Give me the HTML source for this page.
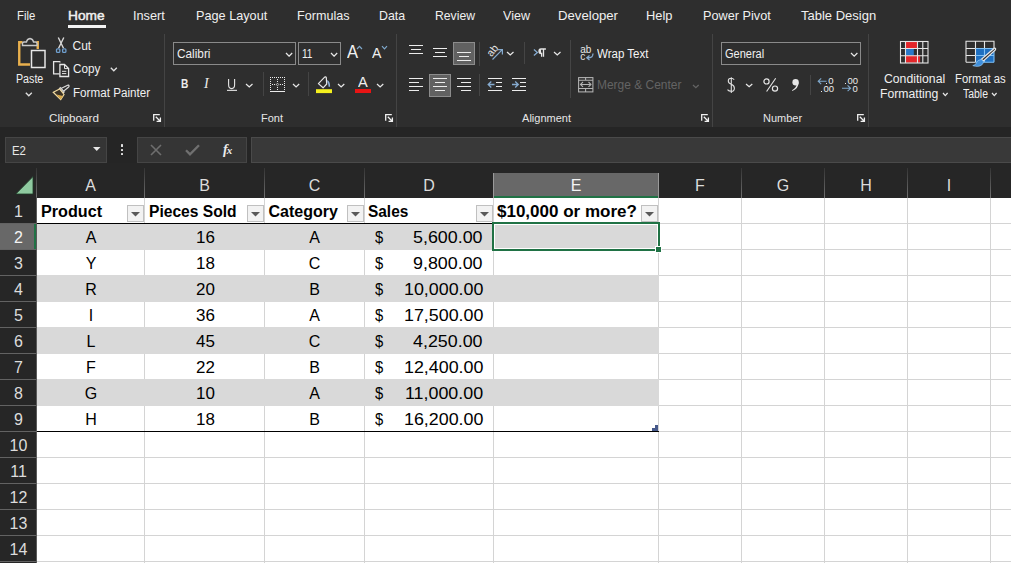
<!DOCTYPE html><html><head><meta charset="utf-8"><style>
html,body{margin:0;padding:0;}
body{width:1011px;height:563px;position:relative;overflow:hidden;background:#2b2b2b;font-family:"Liberation Sans",sans-serif;}
body>div{position:absolute;}
.t{white-space:pre;line-height:0;}
</style></head><body>
<div style="left:0px;top:0px;width:1011px;height:127px;background:#2e2e2e;"></div>
<div style="left:0px;top:127px;width:1011px;height:36px;background:#252525;"></div>
<div class="t" style="left:17.40px;top:16.00px;font-size:13px;color:#f0f0f0;transform:scaleX(0.8708);transform-origin:0 0;">File</div>
<div class="t" style="left:68.20px;top:16.00px;font-size:13px;color:#f0f0f0;transform:scaleX(1.0548);transform-origin:0 0;-webkit-text-stroke:0.45px #f0f0f0;">Home</div>
<div class="t" style="left:133.00px;top:16.00px;font-size:13px;color:#f0f0f0;transform:scaleX(0.9785);transform-origin:0 0;">Insert</div>
<div class="t" style="left:196.30px;top:16.00px;font-size:13px;color:#f0f0f0;transform:scaleX(0.9753);transform-origin:0 0;">Page Layout</div>
<div class="t" style="left:297.20px;top:16.00px;font-size:13px;color:#f0f0f0;transform:scaleX(0.9686);transform-origin:0 0;">Formulas</div>
<div class="t" style="left:379.40px;top:16.00px;font-size:13px;color:#f0f0f0;transform:scaleX(0.9491);transform-origin:0 0;">Data</div>
<div class="t" style="left:435.20px;top:16.00px;font-size:13px;color:#f0f0f0;transform:scaleX(0.9391);transform-origin:0 0;">Review</div>
<div class="t" style="left:502.80px;top:16.00px;font-size:13px;color:#f0f0f0;transform:scaleX(0.9644);transform-origin:0 0;">View</div>
<div class="t" style="left:558.00px;top:16.00px;font-size:13px;color:#f0f0f0;transform:scaleX(1.0118);transform-origin:0 0;">Developer</div>
<div class="t" style="left:646.00px;top:16.00px;font-size:13px;color:#f0f0f0;transform:scaleX(0.9888);transform-origin:0 0;">Help</div>
<div class="t" style="left:703.00px;top:16.00px;font-size:13px;color:#f0f0f0;transform:scaleX(0.9769);transform-origin:0 0;">Power Pivot</div>
<div class="t" style="left:801.00px;top:16.00px;font-size:13px;color:#f0f0f0;">Table Design</div>
<div style="left:68px;top:25px;width:38px;height:3px;background:#f3f3f3;"></div>
<div style="left:164px;top:34px;width:1px;height:93px;background:#444444;"></div>
<div style="left:396px;top:34px;width:1px;height:93px;background:#444444;"></div>
<div style="left:712px;top:34px;width:1px;height:93px;background:#444444;"></div>
<div style="left:868px;top:34px;width:1px;height:93px;background:#444444;"></div>
<div class="t" style="left:48.50px;top:117.79px;font-size:11px;color:#e6e6e6;transform:scaleX(1.0616);transform-origin:0 0;">Clipboard</div>
<div class="t" style="left:261.00px;top:117.79px;font-size:11px;color:#e6e6e6;">Font</div>
<div class="t" style="left:522.05px;top:117.79px;font-size:11px;color:#e6e6e6;">Alignment</div>
<div class="t" style="left:762.95px;top:117.79px;font-size:11px;color:#e6e6e6;">Number</div>
<svg style="position:absolute;left:153px;top:114px" width="9" height="9" viewBox="0 0 9 9"><path d="M0.7 6.8V0.7H6.8M2.8 2.8L7 7M3.6 7.4H7.4V3.6" stroke="#f0f0f0" stroke-width="1.3" fill="none"/></svg>
<svg style="position:absolute;left:385px;top:114px" width="9" height="9" viewBox="0 0 9 9"><path d="M0.7 6.8V0.7H6.8M2.8 2.8L7 7M3.6 7.4H7.4V3.6" stroke="#f0f0f0" stroke-width="1.3" fill="none"/></svg>
<svg style="position:absolute;left:701px;top:114px" width="9" height="9" viewBox="0 0 9 9"><path d="M0.7 6.8V0.7H6.8M2.8 2.8L7 7M3.6 7.4H7.4V3.6" stroke="#f0f0f0" stroke-width="1.3" fill="none"/></svg>
<svg style="position:absolute;left:857px;top:114px" width="9" height="9" viewBox="0 0 9 9"><path d="M0.7 6.8V0.7H6.8M2.8 2.8L7 7M3.6 7.4H7.4V3.6" stroke="#f0f0f0" stroke-width="1.3" fill="none"/></svg>
<svg style="position:absolute;left:12px;top:34px" width="40" height="40" viewBox="0 0 40 40"><path d="M10.5 8.3H7.25V30.5H18M24.5 8.3H25.75V15" stroke="#e9b04d" stroke-width="2.4" fill="none"/><path d="M10.5 11.5V9.5Q10.5 8 12 8H14.5Q15 5 18 4.5Q21 5 21.5 8H23.5Q25 8 25 9.5V11.5Z" stroke="#c8c8c8" stroke-width="1.4" fill="#2e2e2e"/><rect x="19.5" y="16.5" width="13.5" height="17" stroke="#e6e6e6" stroke-width="1.5" fill="#2e2e2e"/></svg>
<div class="t" style="left:15.60px;top:79.24px;font-size:12px;color:#f0f0f0;transform:scaleX(0.8893);transform-origin:0 0;">Paste</div>
<svg style="position:absolute;left:25px;top:92px" width="8" height="5" viewBox="0 0 8 5"><path d="M0.8 0.8L3.8 3.8L6.8 0.8" stroke="#e0e0e0" stroke-width="1.3" fill="none"/></svg>
<svg style="position:absolute;left:50px;top:34px" width="24" height="24" viewBox="0 0 24 24"><path d="M8.3 3.5L13.5 14.3M13.8 3.5L8.6 14.3" stroke="#d8d8d8" stroke-width="1.4" fill="none"/><rect x="6.5" y="14.8" width="3.3" height="3.6" rx="1" stroke="#6f9fcf" stroke-width="1.3" fill="none"/><rect x="12.6" y="14.8" width="3.3" height="3.6" rx="1" stroke="#6f9fcf" stroke-width="1.3" fill="none"/></svg>
<div class="t" style="left:72.50px;top:45.74px;font-size:12px;color:#f0f0f0;">Cut</div>
<svg style="position:absolute;left:50px;top:58px" width="24" height="24" viewBox="0 0 24 24"><path d="M9.6 15.9H3.6V3.6H9.6L10.4 4.4" stroke="#e6e6e6" stroke-width="1.3" fill="none"/><path d="M9.9 6.5H14.5L18.6 10.6V18.5H9.9Z" stroke="#e6e6e6" stroke-width="1.3" fill="#2e2e2e"/><path d="M14.5 6.5V10.6H18.6M12 13.3H16.3M12 15.6H16.3" stroke="#e6e6e6" stroke-width="1" fill="none"/></svg>
<div class="t" style="left:72.50px;top:69.24px;font-size:12px;color:#f0f0f0;transform:scaleX(0.9750);transform-origin:0 0;">Copy</div>
<svg style="position:absolute;left:110px;top:67px" width="8" height="5" viewBox="0 0 8 5"><path d="M0.8 0.8L3.8 3.8L6.8 0.8" stroke="#e0e0e0" stroke-width="1.3" fill="none"/></svg>
<svg style="position:absolute;left:50px;top:80px" width="24" height="24" viewBox="0 0 24 24"><path d="M11 8.5L17.6 5.2Q18.6 4.8 19 5.8Q19.3 6.7 18.4 7.3L13.3 11.5Z" stroke="#dcdcdc" stroke-width="1.2" fill="#2e2e2e"/><path d="M10.3 7.7L14.2 11.9L13.2 12.9L9.4 8.8Z" stroke="#dcdcdc" stroke-width="1.1" fill="#2e2e2e"/><path d="M3.3 12.3L9.6 9L14 14.5L10.7 19.6Z" stroke="#f0d9a0" stroke-width="1.2" fill="#3a3226"/><path d="M6.5 14.5L12.8 16L10.7 19.6Z" fill="#d8a94a"/></svg>
<div class="t" style="left:72.50px;top:93.44px;font-size:12px;color:#f0f0f0;transform:scaleX(0.9710);transform-origin:0 0;">Format Painter</div>
<div style="left:173px;top:42px;width:123px;height:23px;background:#2e2e2e;border:1px solid #8a8a8a;box-sizing:border-box;"></div>
<div class="t" style="left:176.60px;top:53.57px;font-size:12.5px;color:#f0f0f0;transform:scaleX(0.9435);transform-origin:0 0;">Calibri</div>
<svg style="position:absolute;left:285.3px;top:51.8px" width="8.2" height="5.7" viewBox="0 0 8.2 5.7"><path d="M1 1L4.1 4.2L7.2 1" stroke="#e8e8e8" stroke-width="1.25" fill="none"/></svg>
<div style="left:298px;top:42px;width:43px;height:23px;background:#2e2e2e;border:1px solid #8a8a8a;box-sizing:border-box;"></div>
<div class="t" style="left:301.50px;top:53.57px;font-size:12.5px;color:#f0f0f0;transform:scaleX(0.8077);transform-origin:0 0;">11</div>
<svg style="position:absolute;left:330.3px;top:51.8px" width="8.2" height="5.7" viewBox="0 0 8.2 5.7"><path d="M1 1L4.1 4.2L7.2 1" stroke="#e8e8e8" stroke-width="1.25" fill="none"/></svg>
<div class="t" style="left:346.90px;top:51.74px;font-size:17.5px;color:#f0f0f0;transform:scaleX(0.9487);transform-origin:0 0;">A</div>
<svg style="position:absolute;left:356px;top:45px" width="7" height="5" viewBox="0 0 7 5"><path d="M1 4L3.5 1.3L6 4" stroke="#7fa8cc" stroke-width="1.2" fill="none"/></svg>
<div class="t" style="left:372.10px;top:52.78px;font-size:14.5px;color:#f0f0f0;transform:scaleX(0.9691);transform-origin:0 0;">A</div>
<svg style="position:absolute;left:380.5px;top:45px" width="7" height="5" viewBox="0 0 7 5"><path d="M1 1.2L3.5 3.8L6 1.2" stroke="#7fa8cc" stroke-width="1.2" fill="none"/></svg>
<div class="t" style="left:180.80px;top:84.22px;font-size:13.5px;color:#ececec;font-weight:bold;transform:scaleX(0.7551);transform-origin:0 0;">B</div>
<div class="t" style="left:204px;top:84px;font-size:14px;color:#ececec;font-family:'Liberation Serif',serif;font-style:italic;">I</div>
<svg style="position:absolute;left:226px;top:77px" width="12" height="16" viewBox="0 0 12 16"><path d="M2.6 1.9V7.8Q2.6 11.6 5.6 11.6Q8.6 11.6 8.6 7.8V1.9" stroke="#e6e6e6" stroke-width="1.1" fill="none"/><rect x="1" y="12.8" width="10" height="1.1" fill="#e6e6e6"/></svg>
<svg style="position:absolute;left:245.4px;top:83px" width="8.5" height="5.4" viewBox="0 0 8.5 5.4"><path d="M1 1L4.25 3.9L7.5 1" stroke="#e8e8e8" stroke-width="1.25" fill="none"/></svg>
<div style="left:263px;top:72px;width:1px;height:24px;background:#444444;"></div>
<svg style="position:absolute;left:0;top:0" width="400" height="100" viewBox="0 0 400 100"><g fill="#ececec" shape-rendering="crispEdges"><rect x="270" y="77" width="1" height="1"/><rect x="272" y="77" width="1" height="1"/><rect x="274" y="77" width="1" height="1"/><rect x="276" y="77" width="1" height="1"/><rect x="278" y="77" width="1" height="1"/><rect x="280" y="77" width="1" height="1"/><rect x="282" y="77" width="1" height="1"/><rect x="284" y="77" width="1" height="1"/><rect x="270" y="79" width="1" height="1"/><rect x="284" y="79" width="1" height="1"/><rect x="270" y="81" width="1" height="1"/><rect x="284" y="81" width="1" height="1"/><rect x="270" y="83" width="1" height="1"/><rect x="284" y="83" width="1" height="1"/><rect x="270" y="85" width="1" height="1"/><rect x="284" y="85" width="1" height="1"/><rect x="270" y="87" width="1" height="1"/><rect x="284" y="87" width="1" height="1"/><rect x="270" y="89" width="1" height="1"/><rect x="284" y="89" width="1" height="1"/><rect x="277" y="79" width="1" height="1"/><rect x="277" y="81" width="1" height="1"/><rect x="277" y="87" width="1" height="1"/><rect x="277" y="89" width="1" height="1"/><rect x="272" y="84" width="1" height="1"/><rect x="274" y="84" width="1" height="1"/><rect x="280" y="84" width="1" height="1"/><rect x="282" y="84" width="1" height="1"/><path d="M277.5 83.2L278.8 84.5L277.5 85.8L276.2 84.5Z" fill="none" stroke="#e8e8e8" stroke-width="0.8" shape-rendering="auto"/><rect x="270" y="91" width="15" height="1"/></g></svg>
<svg style="position:absolute;left:291.6px;top:83px" width="8.2" height="5.4" viewBox="0 0 8.2 5.4"><path d="M1 1L4.1 3.9L7.2 1" stroke="#e8e8e8" stroke-width="1.25" fill="none"/></svg>
<div style="left:308px;top:72px;width:1px;height:24px;background:#444444;"></div>
<svg style="position:absolute;left:312px;top:72px" width="25" height="25" viewBox="0 0 25 25"><path d="M6.4 11.6L12.4 5.3Q13.6 4.4 14.3 5.6L14.7 12L11.1 15.8Z" stroke="#e6e6e6" stroke-width="1.2" fill="none" stroke-linejoin="round"/><path d="M15.2 8Q18.3 9.5 18.1 14.8L16.6 14.8Q16.5 11 15.2 10Z" fill="#8db0d8"/><rect x="4" y="17.2" width="16" height="3.9" fill="#f5f01e"/></svg>
<svg style="position:absolute;left:337.2px;top:83px" width="8.3" height="5.4" viewBox="0 0 8.3 5.4"><path d="M1 1L4.15 3.9L7.3 1" stroke="#e8e8e8" stroke-width="1.25" fill="none"/></svg>
<div class="t" style="left:358.20px;top:82.43px;font-size:15.5px;color:#f0f0f0;transform:scaleX(0.9423);transform-origin:0 0;">A</div>
<div style="left:355px;top:88.5px;width:16px;height:4.5px;background:#e81414;"></div>
<svg style="position:absolute;left:376.3px;top:83px" width="8.3" height="5.4" viewBox="0 0 8.3 5.4"><path d="M1 1L4.15 3.9L7.3 1" stroke="#e8e8e8" stroke-width="1.25" fill="none"/></svg>
<div style="left:409px;top:44.9px;width:14.199999999999989px;height:1.2px;background:#ececec;"></div>
<div style="left:411.1px;top:48.9px;width:9.899999999999977px;height:1.2px;background:#ececec;"></div>
<div style="left:409px;top:53.0px;width:14.199999999999989px;height:1.2px;background:#ececec;"></div>
<div style="left:433.1px;top:47.9px;width:13.899999999999977px;height:1.2px;background:#ececec;"></div>
<div style="left:435px;top:51.8px;width:10.100000000000023px;height:1.2px;background:#ececec;"></div>
<div style="left:433.1px;top:55.8px;width:13.899999999999977px;height:1.2px;background:#ececec;"></div>
<div style="left:453px;top:42px;width:22px;height:23px;background:#616161;border:1px solid #8c8c8c;box-sizing:border-box;"></div>
<div style="left:457px;top:51.8px;width:14px;height:1.2px;background:#ececec;"></div>
<div style="left:459px;top:55.8px;width:10.199999999999989px;height:1.2px;background:#ececec;"></div>
<div style="left:457px;top:59.8px;width:14px;height:1.2px;background:#ececec;"></div>
<div style="left:409px;top:77.80000000000001px;width:14.199999999999989px;height:1.2px;background:#ececec;"></div>
<div style="left:409px;top:85.80000000000001px;width:14.199999999999989px;height:1.2px;background:#ececec;"></div>
<div style="left:409px;top:81.80000000000001px;width:9.899999999999977px;height:1.2px;background:#ececec;"></div>
<div style="left:409px;top:89.7px;width:9.899999999999977px;height:1.2px;background:#ececec;"></div>
<div style="left:429px;top:74px;width:22px;height:23px;background:#616161;border:1px solid #8c8c8c;box-sizing:border-box;"></div>
<div style="left:432.9px;top:77.80000000000001px;width:14.100000000000023px;height:1.2px;background:#ececec;"></div>
<div style="left:432.9px;top:85.80000000000001px;width:14.100000000000023px;height:1.2px;background:#ececec;"></div>
<div style="left:435px;top:81.80000000000001px;width:10.100000000000023px;height:1.2px;background:#ececec;"></div>
<div style="left:435px;top:89.7px;width:10.100000000000023px;height:1.2px;background:#ececec;"></div>
<div style="left:457px;top:77.80000000000001px;width:14px;height:1.2px;background:#ececec;"></div>
<div style="left:457px;top:85.80000000000001px;width:14px;height:1.2px;background:#ececec;"></div>
<div style="left:460.9px;top:81.80000000000001px;width:10.100000000000023px;height:1.2px;background:#ececec;"></div>
<div style="left:460.9px;top:89.7px;width:10.100000000000023px;height:1.2px;background:#ececec;"></div>
<div style="left:479px;top:42px;width:1px;height:24px;background:#454545;"></div>
<div style="left:479px;top:74px;width:1px;height:22px;background:#454545;"></div>
<svg style="position:absolute;left:482px;top:40px" width="24" height="24" viewBox="0 0 24 24"><text x="0" y="0" transform="translate(9.6 17.3) rotate(-52)" font-family="Liberation Sans" font-size="10.5" fill="#e6e6e6">ab</text><path d="M10.5 19.5L20.3 9.7M15.5 9.6H20.4V14.5" stroke="#86abcf" stroke-width="1.2" fill="none"/></svg>
<svg style="position:absolute;left:506.1px;top:51px" width="8.5" height="5.4" viewBox="0 0 8.5 5.4"><path d="M1 1L4.25 3.9L7.5 1" stroke="#e8e8e8" stroke-width="1.25" fill="none"/></svg>
<div style="left:524px;top:42px;width:1px;height:22px;background:#454545;"></div>
<svg style="position:absolute;left:527px;top:40px" width="24" height="24" viewBox="0 0 24 24"><path d="M6.9 9.5L10.4 12.5L6.9 15.6" stroke="#86abcf" stroke-width="1.3" fill="none"/><path d="M13.8 9Q12 9 12 11.3Q12 13.5 14.2 13.5H14.6V16.8M16.5 9V16.8M13.4 9H18.9" stroke="#e6e6e6" stroke-width="1.3" fill="#e6e6e6"/></svg>
<svg style="position:absolute;left:553.3px;top:51px" width="8.5" height="5.4" viewBox="0 0 8.5 5.4"><path d="M1 1L4.25 3.9L7.5 1" stroke="#e8e8e8" stroke-width="1.25" fill="none"/></svg>
<div style="left:487.9px;top:77.80000000000001px;width:14.200000000000045px;height:1.2px;background:#ececec;"></div>
<div style="left:496.09999999999997px;top:81.9px;width:6.000000000000057px;height:1.2px;background:#ececec;"></div>
<div style="left:496.09999999999997px;top:85.9px;width:6.000000000000057px;height:1.2px;background:#ececec;"></div>
<div style="left:487.9px;top:89.80000000000001px;width:14.200000000000045px;height:1.2px;background:#ececec;"></div>
<div style="left:511.9px;top:77.80000000000001px;width:14.200000000000045px;height:1.2px;background:#ececec;"></div>
<div style="left:520.1px;top:81.9px;width:6.0px;height:1.2px;background:#ececec;"></div>
<div style="left:520.1px;top:85.9px;width:6.0px;height:1.2px;background:#ececec;"></div>
<div style="left:511.9px;top:89.80000000000001px;width:14.200000000000045px;height:1.2px;background:#ececec;"></div>
<svg style="position:absolute;left:486px;top:79px" width="10" height="11" viewBox="0 0 10 11"><path d="M2.5 5.5H8.5M5.3 2.5L2.2 5.5L5.3 8.5" stroke="#86abcf" stroke-width="1.3" fill="none"/></svg>
<svg style="position:absolute;left:510px;top:79px" width="10" height="11" viewBox="0 0 10 11"><path d="M2 5.5H8M5.2 2.5L8.3 5.5L5.2 8.5" stroke="#86abcf" stroke-width="1.3" fill="none"/></svg>
<div style="left:570px;top:40px;width:1px;height:58px;background:#454545;"></div>
<svg style="position:absolute;left:574px;top:42px" width="30" height="24" viewBox="0 0 30 24"><text x="6.2" y="10.7" font-family="Liberation Sans" font-size="10" fill="#e6e6e6">ab</text><text x="6.2" y="17.8" font-family="Liberation Sans" font-size="10" fill="#e6e6e6">c</text><path d="M18.8 11.5Q19.8 15.8 13.5 15.8M15.5 13.5L12.8 15.8L15.5 18" stroke="#86abcf" stroke-width="1.3" fill="none"/></svg>
<div class="t" style="left:597.40px;top:53.67px;font-size:12.5px;color:#f5f5f5;transform:scaleX(0.9229);transform-origin:0 0;">Wrap Text</div>
<svg style="position:absolute;left:574px;top:72px" width="30" height="24" viewBox="0 0 30 24"><g stroke="#b4b4b4" stroke-width="1.05" fill="none"><rect x="4.6" y="5.6" width="14.3" height="14.3"/><path d="M4.6 8.2H18.9M4.6 16.4H18.9M11.6 5.6V8.2M11.6 16.4V19.9M6.5 12.4H17M9 10L6.5 12.4L9 14.8M14.5 10L17 12.4L14.5 14.8"/></g></svg>
<div class="t" style="left:597.40px;top:85.27px;font-size:12.5px;color:#646464;transform:scaleX(0.9569);transform-origin:0 0;">Merge &amp; Center</div>
<svg style="position:absolute;left:692px;top:83.5px" width="7.7" height="5.2" viewBox="0 0 7.7 5.2"><path d="M1 1L3.85 3.7L6.7 1" stroke="#646464" stroke-width="1.25" fill="none"/></svg>
<div style="left:721px;top:42px;width:140px;height:23px;background:#2e2e2e;border:1px solid #8a8a8a;box-sizing:border-box;"></div>
<div class="t" style="left:724.60px;top:53.67px;font-size:12.5px;color:#f0f0f0;transform:scaleX(0.8809);transform-origin:0 0;">General</div>
<svg style="position:absolute;left:850px;top:52.2px" width="8.4" height="5.6" viewBox="0 0 8.4 5.6"><path d="M1 1L4.2 4.1L7.4 1" stroke="#e8e8e8" stroke-width="1.25" fill="none"/></svg>
<svg style="position:absolute;left:724px;top:75px" width="16" height="20" viewBox="0 0 16 20"><path d="M10.2 4.6Q9 3.2 7 3.2Q4.3 3.2 4.3 5.9Q4.3 8.1 7.2 9.2Q10.4 10.4 10.4 13.2Q10.4 16.3 7.2 16.3Q4.8 16.3 3.5 14.6M7.3 2.2V17.9" stroke="#e0e0e0" stroke-width="1.1" fill="none"/></svg>
<svg style="position:absolute;left:745px;top:83px" width="8.3" height="5.2" viewBox="0 0 8.3 5.2"><path d="M1 1L4.15 3.7L7.3 1" stroke="#e8e8e8" stroke-width="1.25" fill="none"/></svg>
<svg style="position:absolute;left:760px;top:74px" width="22" height="22" viewBox="0 0 22 22"><circle cx="6.5" cy="7.4" r="2.6" stroke="#e6e6e6" stroke-width="1.2" fill="none"/><circle cx="15" cy="14.6" r="2.6" stroke="#e6e6e6" stroke-width="1.2" fill="none"/><path d="M15.7 4.3L6.6 17.5" stroke="#e6e6e6" stroke-width="1.1"/></svg>
<svg style="position:absolute;left:788px;top:74px" width="14" height="22" viewBox="0 0 14 22"><circle cx="7.6" cy="8.3" r="3.2" fill="#e6e6e6"/><path d="M10.6 8.6Q10.6 14.6 4.3 17.1L4 16.3Q8 14 8.6 10.5Z" fill="#e6e6e6"/></svg>
<div style="left:810px;top:75px;width:1px;height:20px;background:#454545;"></div>
<svg style="position:absolute;left:815px;top:76px" width="14" height="10" viewBox="0 0 14 10"><path d="M3.3 5.2H11.5M6.2 2.3L3.2 5.2L6.2 8.1" stroke="#7fa8cc" stroke-width="1.1" fill="none"/></svg>
<div style="left:826px;top:83px;width:1.3px;height:1.3px;background:#ececec;"></div>
<div class="t" style="left:828.2px;top:80.71px;font-size:9.5px;color:#ececec;">0</div>
<div style="left:821px;top:91px;width:1.3px;height:1.3px;background:#ececec;"></div>
<div class="t" style="left:823.4px;top:88.71px;font-size:9.5px;color:#ececec;">00</div>
<div style="left:845px;top:83px;width:1.3px;height:1.3px;background:#ececec;"></div>
<div class="t" style="left:847.4px;top:80.71px;font-size:9.5px;color:#ececec;">00</div>
<svg style="position:absolute;left:840px;top:83px" width="14" height="10" viewBox="0 0 14 10"><path d="M2 5.3H10.5M7.6 2.4L10.6 5.3L7.6 8.2" stroke="#7fa8cc" stroke-width="1.1" fill="none"/></svg>
<div class="t" style="left:852.5px;top:88.71px;font-size:9.5px;color:#ececec;">0</div>
<svg style="position:absolute;left:895px;top:36px" width="40" height="32" viewBox="0 0 40 32"><rect x="10.5" y="5" width="12" height="7.2" fill="#e3262a"/><rect x="10.5" y="12.2" width="8.3" height="7.3" fill="#2a78c8"/><rect x="10.5" y="19.5" width="14.6" height="7.2" fill="#e3262a"/><g stroke="#e6e6e6" stroke-width="1.1" fill="none"><rect x="5.5" y="5.5" width="27.5" height="21.5"/><path d="M10.5 5.5V27M22.5 5.5V27M27.8 5.5V27M5.5 12.5H33M5.5 19.8H33"/></g></svg>
<div class="t" style="left:883.50px;top:78.57px;font-size:12.5px;color:#f0f0f0;transform:scaleX(0.9776);transform-origin:0 0;">Conditional</div>
<div class="t" style="left:879.70px;top:94.17px;font-size:12.5px;color:#f0f0f0;transform:scaleX(0.9765);transform-origin:0 0;">Formatting</div>
<svg style="position:absolute;left:941.8px;top:92.3px" width="6.6" height="5.1" viewBox="0 0 6.6 5.1"><path d="M1 1L3.3 3.6L5.6 1" stroke="#e8e8e8" stroke-width="1.25" fill="none"/></svg>
<svg style="position:absolute;left:960px;top:36px" width="40" height="36" viewBox="0 0 40 36"><rect x="15.5" y="12.5" width="18.5" height="13.8" fill="#1e6fc0"/><g stroke="#e6e6e6" stroke-width="1.1" fill="none"><path d="M6 26.3V5.2H34V12.5M6 12.5H15.5M6 19.5H15.5M15.5 5.2V12.5M24.5 5.2V12.5M6 26.3H15.5M15.5 12.5V26.3"/></g><g stroke="#7fc0f5" stroke-width="1.1" fill="none"><path d="M15.5 12.5H34M15.5 19.5H34M24.5 12.5V26.3M34 12.5V26.3M15.5 26.3H34"/></g><path d="M34.3 12.2Q36.3 12 35.4 14L23.4 25L21.4 23.3Z" stroke="#e6e6e6" stroke-width="1.2" fill="#2e2e2e"/><path d="M21.2 23.4Q17 24 16.2 27.3Q15.4 29.3 12.8 29.6Q18.4 31.4 21.8 28.9Q23.8 27 23.3 25.3Z" fill="#3f8fdc" stroke="#8cc2f0" stroke-width="0.8"/></svg>
<div class="t" style="left:955.00px;top:78.57px;font-size:12.5px;color:#f0f0f0;transform:scaleX(0.9005);transform-origin:0 0;">Format as</div>
<div class="t" style="left:963.00px;top:94.17px;font-size:12.5px;color:#f0f0f0;transform:scaleX(0.8361);transform-origin:0 0;">Table</div>
<svg style="position:absolute;left:991.4px;top:92.3px" width="6.6" height="5.1" viewBox="0 0 6.6 5.1"><path d="M1 1L3.3 3.6L5.6 1" stroke="#e8e8e8" stroke-width="1.25" fill="none"/></svg>
<div style="left:5px;top:137px;width:102px;height:26px;background:#353535;border:1px solid #454545;box-sizing:border-box;"></div>
<div class="t" style="left:12.30px;top:150.80px;font-size:13px;color:#e8e8e8;transform:scaleX(0.8742);transform-origin:0 0;">E2</div>
<svg style="position:absolute;left:92.8px;top:147px" width="8" height="5" viewBox="0 0 8 5"><path d="M0 0h7.5L3.75 4z" fill="#e8e8e8"/></svg>
<div style="left:121px;top:144.4px;width:2.3px;height:2.3px;background:#e0e0e0;border-radius:0.5px;"></div>
<div style="left:121px;top:148.9px;width:2.3px;height:2.3px;background:#e0e0e0;border-radius:0.5px;"></div>
<div style="left:121px;top:153.2px;width:2.3px;height:2.3px;background:#e0e0e0;border-radius:0.5px;"></div>
<div style="left:137px;top:137px;width:110px;height:26px;background:#353535;border:1px solid #454545;box-sizing:border-box;"></div>
<svg style="position:absolute;left:150px;top:144px" width="12" height="12" viewBox="0 0 12 12"><path d="M1 1L11 11M11 1L1 11" stroke="#6e6e6e" stroke-width="1.6"/></svg>
<svg style="position:absolute;left:185px;top:144px" width="15" height="12" viewBox="0 0 15 12"><path d="M1 6.2L5 10.3L14 1.3" stroke="#707070" stroke-width="2.3" fill="none"/></svg>
<div class="t" style="left:223px;top:139.5px;font-size:14px;line-height:20px;color:#ececec;font-family:'Liberation Serif',serif;font-style:italic;font-weight:bold;">f<span style="font-size:11px;margin-left:-1px">x</span></div>
<div style="left:251px;top:137px;width:760px;height:26px;background:#393939;border:1px solid #4a4a4a;border-right:none;box-sizing:border-box;"></div>
<div style="left:0px;top:163px;width:1011px;height:35px;background:#262626;"></div>
<div style="left:0px;top:197px;width:36px;height:366px;background:#262626;"></div>
<div style="left:37px;top:198px;width:974px;height:365px;background:#ffffff;"></div>
<div style="left:494px;top:173px;width:164px;height:25px;background:#686868;"></div>
<div style="left:494px;top:196px;width:164px;height:2px;background:#207245;"></div>
<div style="left:36px;top:168px;width:1px;height:30px;background:linear-gradient(#353535,#707070);"></div>
<div style="left:144px;top:168px;width:1px;height:30px;background:linear-gradient(#353535,#707070);"></div>
<div style="left:264px;top:168px;width:1px;height:30px;background:linear-gradient(#353535,#707070);"></div>
<div style="left:364px;top:168px;width:1px;height:30px;background:linear-gradient(#353535,#707070);"></div>
<div style="left:493px;top:173px;width:1px;height:25px;background:#9a9a9a;"></div>
<div style="left:658px;top:173px;width:1px;height:25px;background:#9a9a9a;"></div>
<div style="left:741px;top:168px;width:1px;height:30px;background:linear-gradient(#353535,#707070);"></div>
<div style="left:824px;top:168px;width:1px;height:30px;background:linear-gradient(#353535,#707070);"></div>
<div style="left:907px;top:168px;width:1px;height:30px;background:linear-gradient(#353535,#707070);"></div>
<div style="left:990px;top:168px;width:1px;height:30px;background:linear-gradient(#353535,#707070);"></div>
<div class="t" style="left:85.15px;top:186.06px;font-size:16px;color:#dcdcdc;">A</div>
<div class="t" style="left:199.15px;top:186.06px;font-size:16px;color:#dcdcdc;">B</div>
<div class="t" style="left:308.70px;top:186.06px;font-size:16px;color:#dcdcdc;">C</div>
<div class="t" style="left:423.20px;top:186.06px;font-size:16px;color:#dcdcdc;">D</div>
<div class="t" style="left:570.65px;top:186.06px;font-size:16px;color:#f4f4f4;">E</div>
<div class="t" style="left:695.10px;top:186.06px;font-size:16px;color:#dcdcdc;">F</div>
<div class="t" style="left:776.80px;top:186.06px;font-size:16px;color:#dcdcdc;">G</div>
<div class="t" style="left:860.20px;top:186.06px;font-size:16px;color:#dcdcdc;">H</div>
<div class="t" style="left:946.80px;top:186.06px;font-size:16px;color:#dcdcdc;">I</div>
<svg style="position:absolute;left:15px;top:176px" width="19" height="19" viewBox="0 0 19 19"><path d="M18 0.6V18H0.8z" fill="#8fcaa0" stroke="#1d3a27" stroke-width="0.8"/></svg>
<div style="left:0px;top:223px;width:36px;height:1px;background:#626262;"></div>
<div class="t" style="left:14.05px;top:211.86px;font-size:16px;color:#dcdcdc;">1</div>
<div style="left:0px;top:224px;width:36px;height:25px;background:#686868;"></div>
<div style="left:34px;top:224px;width:2px;height:25px;background:#207245;"></div>
<div style="left:0px;top:249px;width:36px;height:1px;background:#626262;"></div>
<div class="t" style="left:14.05px;top:237.86px;font-size:16px;color:#f4f4f4;">2</div>
<div style="left:0px;top:275px;width:36px;height:1px;background:#626262;"></div>
<div class="t" style="left:14.05px;top:263.86px;font-size:16px;color:#dcdcdc;">3</div>
<div style="left:0px;top:301px;width:36px;height:1px;background:#626262;"></div>
<div class="t" style="left:14.05px;top:289.86px;font-size:16px;color:#dcdcdc;">4</div>
<div style="left:0px;top:327px;width:36px;height:1px;background:#626262;"></div>
<div class="t" style="left:14.05px;top:315.86px;font-size:16px;color:#dcdcdc;">5</div>
<div style="left:0px;top:353px;width:36px;height:1px;background:#626262;"></div>
<div class="t" style="left:14.05px;top:341.86px;font-size:16px;color:#dcdcdc;">6</div>
<div style="left:0px;top:379px;width:36px;height:1px;background:#626262;"></div>
<div class="t" style="left:14.05px;top:367.86px;font-size:16px;color:#dcdcdc;">7</div>
<div style="left:0px;top:405px;width:36px;height:1px;background:#626262;"></div>
<div class="t" style="left:14.05px;top:393.86px;font-size:16px;color:#dcdcdc;">8</div>
<div style="left:0px;top:431px;width:36px;height:1px;background:#626262;"></div>
<div class="t" style="left:14.05px;top:419.86px;font-size:16px;color:#dcdcdc;">9</div>
<div style="left:0px;top:457px;width:36px;height:1px;background:#626262;"></div>
<div class="t" style="left:9.60px;top:445.86px;font-size:16px;color:#dcdcdc;">10</div>
<div style="left:0px;top:483px;width:36px;height:1px;background:#626262;"></div>
<div class="t" style="left:10.20px;top:471.86px;font-size:16px;color:#dcdcdc;">11</div>
<div style="left:0px;top:509px;width:36px;height:1px;background:#626262;"></div>
<div class="t" style="left:9.60px;top:497.86px;font-size:16px;color:#dcdcdc;">12</div>
<div style="left:0px;top:535px;width:36px;height:1px;background:#626262;"></div>
<div class="t" style="left:9.60px;top:523.86px;font-size:16px;color:#dcdcdc;">13</div>
<div style="left:0px;top:561px;width:36px;height:1px;background:#626262;"></div>
<div class="t" style="left:9.60px;top:549.86px;font-size:16px;color:#dcdcdc;">14</div>
<div style="left:36px;top:197px;width:1px;height:366px;background:#5a5a5a;"></div>
<div style="left:144px;top:198px;width:1px;height:365px;background:#d4d4d4;"></div>
<div style="left:264px;top:198px;width:1px;height:365px;background:#d4d4d4;"></div>
<div style="left:364px;top:198px;width:1px;height:365px;background:#d4d4d4;"></div>
<div style="left:493px;top:198px;width:1px;height:365px;background:#d4d4d4;"></div>
<div style="left:658px;top:198px;width:1px;height:365px;background:#d4d4d4;"></div>
<div style="left:741px;top:198px;width:1px;height:365px;background:#d4d4d4;"></div>
<div style="left:824px;top:198px;width:1px;height:365px;background:#d4d4d4;"></div>
<div style="left:907px;top:198px;width:1px;height:365px;background:#d4d4d4;"></div>
<div style="left:990px;top:198px;width:1px;height:365px;background:#d4d4d4;"></div>
<div style="left:37px;top:223px;width:974px;height:1px;background:#d4d4d4;"></div>
<div style="left:37px;top:249px;width:974px;height:1px;background:#d4d4d4;"></div>
<div style="left:37px;top:275px;width:974px;height:1px;background:#d4d4d4;"></div>
<div style="left:37px;top:301px;width:974px;height:1px;background:#d4d4d4;"></div>
<div style="left:37px;top:327px;width:974px;height:1px;background:#d4d4d4;"></div>
<div style="left:37px;top:353px;width:974px;height:1px;background:#d4d4d4;"></div>
<div style="left:37px;top:379px;width:974px;height:1px;background:#d4d4d4;"></div>
<div style="left:37px;top:405px;width:974px;height:1px;background:#d4d4d4;"></div>
<div style="left:37px;top:431px;width:974px;height:1px;background:#d4d4d4;"></div>
<div style="left:37px;top:457px;width:974px;height:1px;background:#d4d4d4;"></div>
<div style="left:37px;top:483px;width:974px;height:1px;background:#d4d4d4;"></div>
<div style="left:37px;top:509px;width:974px;height:1px;background:#d4d4d4;"></div>
<div style="left:37px;top:535px;width:974px;height:1px;background:#d4d4d4;"></div>
<div style="left:37px;top:561px;width:974px;height:1px;background:#d4d4d4;"></div>
<div style="left:37px;top:224px;width:622px;height:26px;background:#d9d9d9;"></div>
<div style="left:37px;top:275px;width:622px;height:27px;background:#d9d9d9;"></div>
<div style="left:37px;top:327px;width:622px;height:27px;background:#d9d9d9;"></div>
<div style="left:37px;top:379px;width:622px;height:27px;background:#d9d9d9;"></div>
<div style="left:37px;top:223px;width:622px;height:1px;background:#000000;"></div>
<div style="left:37px;top:431px;width:622px;height:1px;background:#000000;"></div>
<div class="t" style="left:40.50px;top:212.46px;font-size:16px;color:#000;font-weight:bold;transform:scaleX(1.0099);transform-origin:0 0;">Product</div>
<div class="t" style="left:148.60px;top:212.46px;font-size:16px;color:#000;font-weight:bold;transform:scaleX(0.9755);transform-origin:0 0;">Pieces Sold</div>
<div class="t" style="left:268.50px;top:212.46px;font-size:16px;color:#000;font-weight:bold;">Category</div>
<div class="t" style="left:368.20px;top:212.46px;font-size:16px;color:#000;font-weight:bold;transform:scaleX(0.9641);transform-origin:0 0;">Sales</div>
<div class="t" style="left:497.10px;top:211.86px;font-size:16px;color:#000;font-weight:bold;transform:scaleX(1.0623);transform-origin:0 0;">$10,000 or more?</div>
<div style="left:127px;top:205px;width:17px;height:17px;background:#f2f2f2;border:1px solid #c0c0c0;box-sizing:border-box;"></div>
<svg style="position:absolute;left:131px;top:212px" width="9" height="5" viewBox="0 0 9 5"><path d="M0 0h9L4.5 4.5z" fill="#595959"/></svg>
<div style="left:247px;top:205px;width:17px;height:17px;background:#f2f2f2;border:1px solid #c0c0c0;box-sizing:border-box;"></div>
<svg style="position:absolute;left:251px;top:212px" width="9" height="5" viewBox="0 0 9 5"><path d="M0 0h9L4.5 4.5z" fill="#595959"/></svg>
<div style="left:347px;top:205px;width:17px;height:17px;background:#f2f2f2;border:1px solid #c0c0c0;box-sizing:border-box;"></div>
<svg style="position:absolute;left:351px;top:212px" width="9" height="5" viewBox="0 0 9 5"><path d="M0 0h9L4.5 4.5z" fill="#595959"/></svg>
<div style="left:476px;top:205px;width:17px;height:17px;background:#f2f2f2;border:1px solid #c0c0c0;box-sizing:border-box;"></div>
<svg style="position:absolute;left:480px;top:212px" width="9" height="5" viewBox="0 0 9 5"><path d="M0 0h9L4.5 4.5z" fill="#595959"/></svg>
<div style="left:641px;top:205px;width:17px;height:17px;background:#f2f2f2;border:1px solid #c0c0c0;box-sizing:border-box;"></div>
<svg style="position:absolute;left:645px;top:212px" width="9" height="5" viewBox="0 0 9 5"><path d="M0 0h9L4.5 4.5z" fill="#595959"/></svg>
<div class="t" style="left:85.65px;top:238.26px;font-size:16px;color:#000;">A</div>
<div class="t" style="left:196.07px;top:238.26px;font-size:16px;color:#000;transform:scaleX(1.0600);transform-origin:0 0;">16</div>
<div class="t" style="left:309.15px;top:238.26px;font-size:16px;color:#000;">A</div>
<div class="t" style="left:375.30px;top:238.26px;font-size:16px;color:#000;transform:scaleX(0.9213);transform-origin:0 0;">$</div>
<div class="t" style="left:413.47px;top:238.26px;font-size:16px;color:#000;transform:scaleX(1.1160);transform-origin:0 0;">5,600.00</div>
<div class="t" style="left:85.65px;top:264.26px;font-size:16px;color:#000;">Y</div>
<div class="t" style="left:196.07px;top:264.26px;font-size:16px;color:#000;transform:scaleX(1.0600);transform-origin:0 0;">18</div>
<div class="t" style="left:308.70px;top:264.26px;font-size:16px;color:#000;">C</div>
<div class="t" style="left:375.30px;top:264.26px;font-size:16px;color:#000;transform:scaleX(0.9213);transform-origin:0 0;">$</div>
<div class="t" style="left:413.47px;top:264.26px;font-size:16px;color:#000;transform:scaleX(1.1160);transform-origin:0 0;">9,800.00</div>
<div class="t" style="left:85.20px;top:290.26px;font-size:16px;color:#000;">R</div>
<div class="t" style="left:196.07px;top:290.26px;font-size:16px;color:#000;transform:scaleX(1.0600);transform-origin:0 0;">20</div>
<div class="t" style="left:309.15px;top:290.26px;font-size:16px;color:#000;">B</div>
<div class="t" style="left:375.30px;top:290.26px;font-size:16px;color:#000;transform:scaleX(0.9213);transform-origin:0 0;">$</div>
<div class="t" style="left:403.54px;top:290.26px;font-size:16px;color:#000;transform:scaleX(1.1160);transform-origin:0 0;">10,000.00</div>
<div class="t" style="left:88.80px;top:316.26px;font-size:16px;color:#000;">I</div>
<div class="t" style="left:196.07px;top:316.26px;font-size:16px;color:#000;transform:scaleX(1.0600);transform-origin:0 0;">36</div>
<div class="t" style="left:309.15px;top:316.26px;font-size:16px;color:#000;">A</div>
<div class="t" style="left:375.30px;top:316.26px;font-size:16px;color:#000;transform:scaleX(0.9213);transform-origin:0 0;">$</div>
<div class="t" style="left:403.54px;top:316.26px;font-size:16px;color:#000;transform:scaleX(1.1160);transform-origin:0 0;">17,500.00</div>
<div class="t" style="left:86.55px;top:342.26px;font-size:16px;color:#000;">L</div>
<div class="t" style="left:196.07px;top:342.26px;font-size:16px;color:#000;transform:scaleX(1.0600);transform-origin:0 0;">45</div>
<div class="t" style="left:308.70px;top:342.26px;font-size:16px;color:#000;">C</div>
<div class="t" style="left:375.30px;top:342.26px;font-size:16px;color:#000;transform:scaleX(0.9213);transform-origin:0 0;">$</div>
<div class="t" style="left:413.47px;top:342.26px;font-size:16px;color:#000;transform:scaleX(1.1160);transform-origin:0 0;">4,250.00</div>
<div class="t" style="left:86.10px;top:368.26px;font-size:16px;color:#000;">F</div>
<div class="t" style="left:196.07px;top:368.26px;font-size:16px;color:#000;transform:scaleX(1.0600);transform-origin:0 0;">22</div>
<div class="t" style="left:309.15px;top:368.26px;font-size:16px;color:#000;">B</div>
<div class="t" style="left:375.30px;top:368.26px;font-size:16px;color:#000;transform:scaleX(0.9213);transform-origin:0 0;">$</div>
<div class="t" style="left:403.54px;top:368.26px;font-size:16px;color:#000;transform:scaleX(1.1160);transform-origin:0 0;">12,400.00</div>
<div class="t" style="left:84.80px;top:394.26px;font-size:16px;color:#000;">G</div>
<div class="t" style="left:196.07px;top:394.26px;font-size:16px;color:#000;transform:scaleX(1.0600);transform-origin:0 0;">10</div>
<div class="t" style="left:309.15px;top:394.26px;font-size:16px;color:#000;">A</div>
<div class="t" style="left:375.30px;top:394.26px;font-size:16px;color:#000;transform:scaleX(0.9213);transform-origin:0 0;">$</div>
<div class="t" style="left:404.88px;top:394.26px;font-size:16px;color:#000;transform:scaleX(1.1160);transform-origin:0 0;">11,000.00</div>
<div class="t" style="left:85.20px;top:420.26px;font-size:16px;color:#000;">H</div>
<div class="t" style="left:196.07px;top:420.26px;font-size:16px;color:#000;transform:scaleX(1.0600);transform-origin:0 0;">18</div>
<div class="t" style="left:309.15px;top:420.26px;font-size:16px;color:#000;">B</div>
<div class="t" style="left:375.30px;top:420.26px;font-size:16px;color:#000;transform:scaleX(0.9213);transform-origin:0 0;">$</div>
<div class="t" style="left:403.54px;top:420.26px;font-size:16px;color:#000;transform:scaleX(1.1160);transform-origin:0 0;">16,200.00</div>
<div style="left:492px;top:222px;width:168px;height:29px;background:transparent;border:2px solid #207245;box-sizing:border-box;"></div>
<div style="left:494px;top:224px;width:164px;height:25px;background:transparent;border:1px solid #fff;box-sizing:border-box;"></div>
<div style="left:655px;top:246px;width:7px;height:7px;background:#ffffff;"></div>
<div style="left:656px;top:247px;width:5px;height:5px;background:#207245;"></div>
<div style="left:652px;top:428px;width:6px;height:3px;background:#46598a;"></div>
<div style="left:655px;top:425px;width:3px;height:3px;background:#46598a;"></div>
</body></html>
